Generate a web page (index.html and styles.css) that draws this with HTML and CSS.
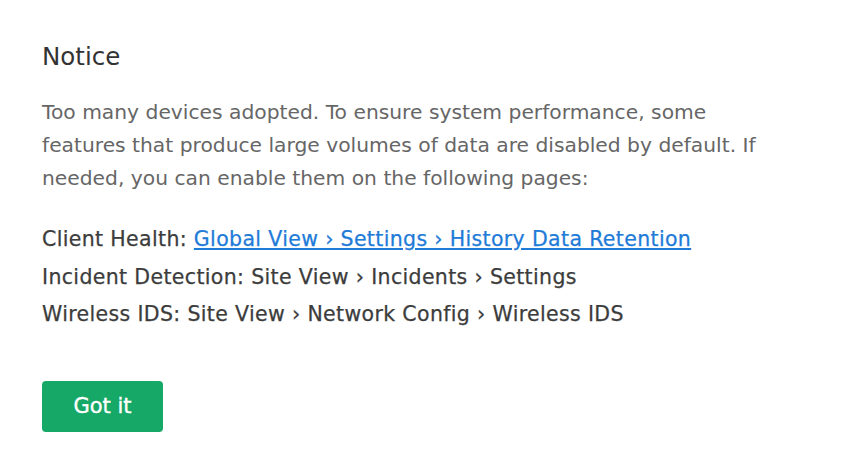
FILE: index.html
```html
<!DOCTYPE html>
<html>
<head>
<meta charset="utf-8">
<link rel="stylesheet" href="styles.css">
</head>
<body>
<div class="dialog">
  <h1 class="title">Notice</h1>
  <p class="message">Too many devices adopted. To ensure system performance, some features that produce large volumes of data are disabled by default. If needed, you can enable them on the following pages:</p>
  <ul class="paths">
    <li>Client Health: <a class="link" href="#">Global View &rsaquo; Settings &rsaquo; History Data Retention</a></li>
    <li>Incident Detection: Site View &rsaquo; Incidents &rsaquo; Settings</li>
    <li>Wireless IDS: Site View &rsaquo; Network Config &rsaquo; Wireless IDS</li>
  </ul>
  <button class="btn">Got it</button>
</div>
</body>
</html>
```
FILE: styles.css
```css
html, body {
  margin: 0;
  padding: 0;
  background: #ffffff;
}
body {
  font-family: "DejaVu Sans", sans-serif;
}
.dialog {
  padding: 40px 0 0 42px;
  width: 730px;
  display: flex;
  flex-direction: column;
  align-items: flex-start;
}
.title {
  margin: 0;
  font-size: 24.5px;
  font-weight: 400;
  color: #333333;
  line-height: 34px;
}
.message {
  margin: 22px 0 0 0;
  font-size: 20.25px;
  line-height: 33px;
  color: #666666;
}
.paths {
  list-style: none;
  margin: 26px 0 0 0;
  padding: 0;
  font-size: 20.5px;
  color: #3c3c3c;
  line-height: 37.5px;
  letter-spacing: 0.35px;
  -webkit-text-stroke: 0.25px currentColor;
}
.link {
  color: #1e7bd8;
  text-decoration: underline;
}
.btn {
  margin-top: 47px;
  width: 121px;
  height: 51px;
  border: none;
  border-radius: 4px;
  background: #16a866;
  color: #ffffff;
  font-family: "DejaVu Sans", sans-serif;
  font-size: 21px;
  font-weight: 400;
  -webkit-text-stroke: 0.4px currentColor;
}
```
